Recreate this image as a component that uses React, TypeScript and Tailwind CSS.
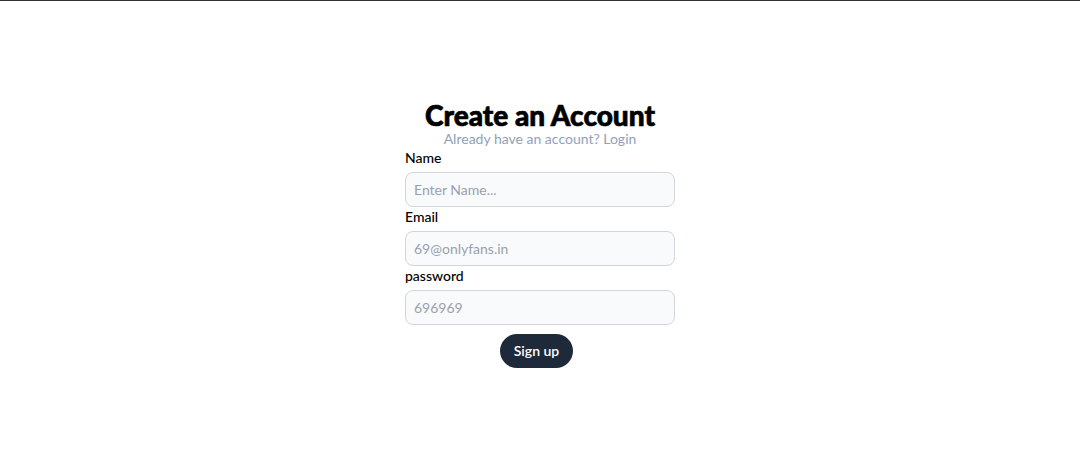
export default function App() {
  const fields = [
    { label: 'Name', placeholder: 'Enter Name...' },
    { label: 'Email', placeholder: '69@onlyfans.in' },
    { label: 'password', placeholder: '696969' },
  ];
  return (
    <div className="min-h-[471px] bg-white border-t border-[#333]" style={{ fontFamily: 'Lato, "Noto Sans", sans-serif' }}>
      <div className="flex flex-col items-center pt-[99px]">
        <div className="w-[270px]">
          <div className="text-center">
            <h1 className="text-[28px] leading-[30px] font-black text-black [-webkit-text-stroke:0.7px_black]">Create an Account</h1>
            <p className="text-[14px] leading-[18px] text-slate-400">Already have an account? Login</p>
          </div>
          {fields.map(f => (
            <div key={f.label} className="mt-[1px]">
              <label className="block text-sm font-medium text-black leading-[18px] mb-[5px]">{f.label}</label>
              <input
                type="text"
                placeholder={f.placeholder}
                className="w-full h-[35px] px-2 rounded-lg bg-gray-50 border border-gray-300 text-sm placeholder:text-gray-400 outline-none"
              />
            </div>
          ))}
          <div className="flex justify-center mt-[9px]">
            <button className="h-[34px] px-[14px] mr-[7px] rounded-full bg-gray-800 text-white text-sm font-semibold">Sign up</button>
          </div>
        </div>
      </div>
    </div>
  );
}
